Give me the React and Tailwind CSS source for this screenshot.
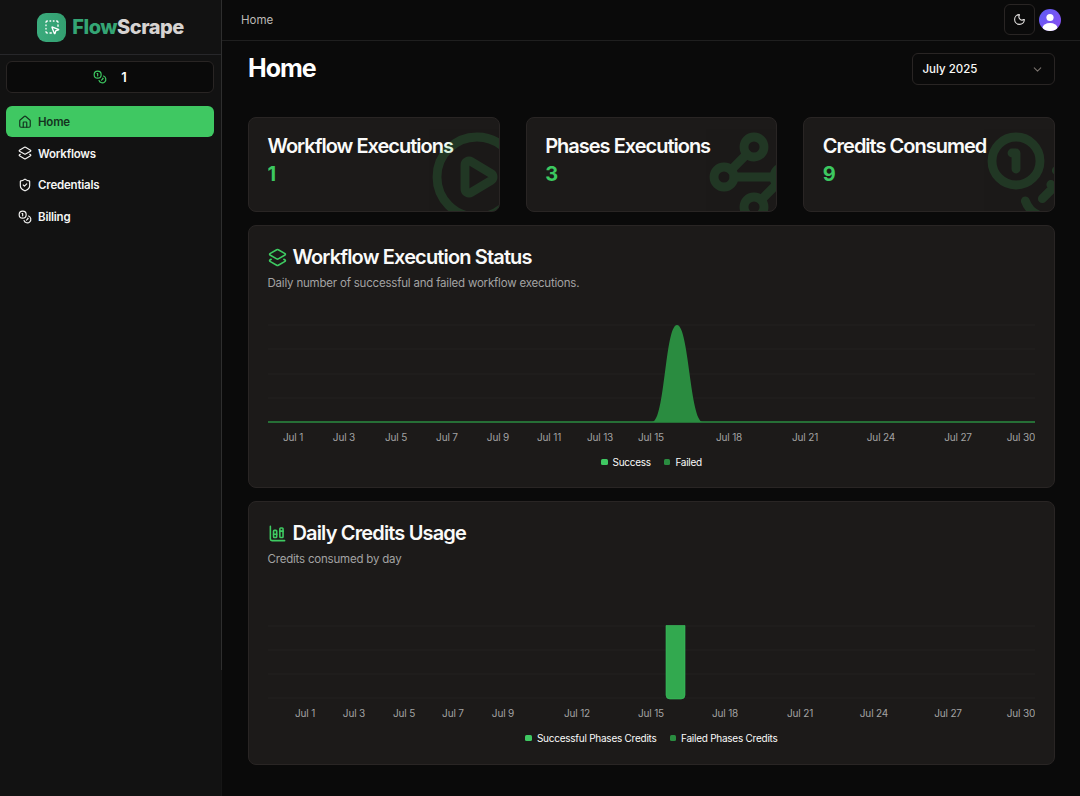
import React from "react";
import {
  ChartColumnStacked,
  ChevronDown,
  CirclePlay,
  Coins,
  House,
  Layers2,
  Moon,
  ShieldCheck,
  SquareDashedMousePointer,
  Waypoints,
} from "lucide-react";

const navItems = [
  { label: "Home", icon: House, active: true },
  { label: "Workflows", icon: Layers2 },
  { label: "Credentials", icon: ShieldCheck },
  { label: "Billing", icon: Coins },
];

const stats = [
  { title: "Workflow Executions", value: 1, icon: CirclePlay },
  { title: "Phases Executions", value: 3, icon: Waypoints },
  { title: "Credits Consumed", value: 9, icon: Coins },
];

const statusTicks = [
  ["Jul 1", 25],
  ["Jul 3", 76],
  ["Jul 5", 128],
  ["Jul 7", 179],
  ["Jul 9", 230],
  ["Jul 11", 281],
  ["Jul 13", 332],
  ["Jul 15", 383],
  ["Jul 18", 461],
  ["Jul 21", 537],
  ["Jul 24", 613],
  ["Jul 27", 690],
  ["Jul 30", 753],
];

const creditTicks = [
  ["Jul 1", 37],
  ["Jul 3", 86],
  ["Jul 5", 136],
  ["Jul 7", 185],
  ["Jul 9", 235],
  ["Jul 12", 309],
  ["Jul 15", 383],
  ["Jul 18", 457],
  ["Jul 21", 532],
  ["Jul 24", 606],
  ["Jul 27", 680],
  ["Jul 30", 753],
];

const Sidebar = () => (
  <aside className="relative w-[222px] shrink-0 border-r border-[#161616] bg-[#121212]">
    <div className="flex h-[55px] items-center justify-center gap-[6px] border-b border-[#27272a]">
      <div className="flex size-[29px] items-center justify-center rounded-[9px] bg-gradient-to-r from-[#3bab7d] to-[#339f70]">
        <SquareDashedMousePointer size={16} className="text-white" strokeWidth={2} />
      </div>
      <div className="text-[20px] font-extrabold tracking-[-0.5px]">
        <span className="text-[#34a574]">Flow</span>
        <span className="text-[#d6d3d1]">Scrape</span>
      </div>
    </div>
    <div className="py-1.5 pr-[7px] pl-1.5">
      <div className="flex h-[32px] items-center justify-center gap-[14px] rounded-md border border-[#292524] bg-[#0a0a0a]">
        <Coins size={14} className="text-[#3ecb62]" />
        <span className="pt-0.5 text-[13px] font-semibold text-white">1</span>
      </div>
    </div>
    <nav className="mt-[7px] flex flex-col gap-[0.7px] pr-[7px] pl-1.5">
      {navItems.map(({ label, icon: Icon, active }) => (
        <div
          key={label}
          className={`flex h-[31px] items-center gap-[6px] rounded-md px-3 text-[11.5px] font-semibold tracking-[-0.2px] ${
            active ? "bg-[#3fc862] text-[#14331f]" : "text-[#f5f5f4]"
          }`}
        >
          <Icon size={14} />
          <span className="pt-0.5">{label}</span>
        </div>
      ))}
    </nav>
    {/* scrollbar thumb sitting on the sidebar edge */}
    <div className="absolute top-0 -right-px h-[670px] w-px bg-[#2e2e2e]" />
  </aside>
);

const Avatar = () => (
  <div className="size-[22px] overflow-hidden rounded-full bg-gradient-to-br from-[#5b5bf5] to-[#8b4ff0]">
    <svg viewBox="0 0 22 22" className="size-full">
      <circle cx="11" cy="8.5" r="3.6" fill="#fff" />
      <ellipse cx="11" cy="19" rx="7.5" ry="5" fill="#fff" />
    </svg>
  </div>
);

const Header = () => (
  <header className="flex h-[41px] shrink-0 items-center justify-between border-b border-[#1f1f1f] px-[19px]">
    <span className="pt-0.5 text-[11.5px] text-[#bcb9b6]">Home</span>
    <div className="flex items-center gap-1">
      <button className="mb-px flex size-[31px] items-center justify-center rounded-md border border-[#292524]">
        <Moon size={13} className="text-[#e7e5e4]" />
      </button>
      <Avatar />
    </div>
  </header>
);

const StatCard = ({ title, value, icon: Icon }) => (
  <div className="relative h-[95px] overflow-hidden rounded-lg border border-[#292524] bg-[#1c1a19] px-[18.5px] pt-[13px]">
    <div className="text-[20px] leading-[30px] font-semibold tracking-[-1px] text-[#fafaf9]">{title}</div>
    <div className="text-[20px] leading-[26px] font-bold text-[#3cc860]">{value}</div>
    <Icon size={96} strokeWidth={2.2} className="absolute -right-[26px] -bottom-[14px] text-[#3fc862] opacity-[0.17]" />
  </div>
);

const Legend = ({ items }) => (
  <div className="flex justify-center gap-[13px] text-[10px] leading-4 tracking-[-0.25px] text-[#fafaf9]">
    {items.map(([label, color]) => (
      <div key={label} className="flex items-center gap-[5px]">
        <span className={`size-[6.5px] rounded-[1.5px] ${color}`} />
        {label}
      </div>
    ))}
  </div>
);

const GridLines = ({ ys }) =>
  ys.map((y) => <line key={y} x1="0" x2="767" y1={y} y2={y} stroke="#292524" strokeWidth="1" strokeOpacity="0.6" />);

const Ticks = ({ ticks, y }) =>
  ticks.map(([label, x]) => (
    <text key={label} x={x} y={y} textAnchor="middle" fontSize="10" letterSpacing="-0.15" fill="#a3a3a3">
      {label}
    </text>
  ));

const ChartCard = ({ icon: Icon, title, subtitle, children, className }) => (
  <div className={`rounded-lg border border-[#292524] bg-[#1c1a19] px-[18.5px] ${className}`}>
    <div className="flex items-center gap-[6px]">
      <Icon size={19} className="text-[#3ecb62]" />
      <h2 className="text-[20px] leading-7 font-semibold tracking-[-0.85px] text-[#fafaf9]">{title}</h2>
    </div>
    <p className="mt-1 text-[11.5px] leading-4 tracking-[-0.2px] text-[#a3a3a3]">{subtitle}</p>
    {children}
  </div>
);

const StatusChart = () => (
  <svg viewBox="0 0 767 130" className="mt-[33px] block h-[130px] w-[767px]">
    <GridLines ys={[1, 25, 50, 74]} />
    <path d="M384 98 C397 98 397 1 409 1 C421 1 422 98 435 98 Z" fill="#2a8c40" />
    <line x1="0" x2="767" y1="98" y2="98" stroke="#2a8c40" strokeWidth="1.5" />
    <Ticks ticks={statusTicks} y={117} />
  </svg>
);

const CreditsChart = () => (
  <svg viewBox="0 0 767 105" className="mt-[58px] block h-[105px] w-[767px]">
    <GridLines ys={[1, 25, 49, 73]} />
    <path
      d="M398 0.5 H417 V70 A4 4 0 0 1 413 74 H402 A4 4 0 0 1 398 70 Z"
      fill="#32a94f"
      stroke="#3ac25d"
      strokeOpacity="0.6"
    />
    <Ticks ticks={creditTicks} y={92} />
  </svg>
);

const App = () => {
  return (
    <div className="flex h-screen w-full overflow-hidden bg-[#0a0a0a] font-['Inter',sans-serif]">
      <Sidebar />
      <div className="flex min-w-0 flex-1 flex-col">
        <Header />
        <main className="flex-1 pr-[25px] pl-[26px]">
          <div className="flex items-start justify-between pt-3">
            <h1 className="text-[25px] leading-[30px] font-bold tracking-[-1px] text-white">Home</h1>
            <div className="flex h-[32px] w-[143px] items-center justify-between rounded-md border border-[#292524] pr-[10px] pl-[9.5px] text-[11.5px] font-medium text-[#fafaf9]">
              <span className="pt-0.5">July 2025</span>
              <ChevronDown size={13} className="text-[#78716c]" />
            </div>
          </div>
          <div className="mt-8 grid grid-cols-3 gap-[26px]">
            {stats.map((stat) => (
              <StatCard key={stat.title} {...stat} />
            ))}
          </div>
          <ChartCard
            className="mt-[13px] h-[263px] pt-[17px]"
            icon={Layers2}
            title="Workflow Execution Status"
            subtitle="Daily number of successful and failed workflow executions."
          >
            <StatusChart />
            <Legend
              items={[
                ["Success", "bg-[#3fc862]"],
                ["Failed", "bg-[#2a8c40]"],
              ]}
            />
          </ChartCard>
          <ChartCard
            className="mt-[13px] h-[264px] pt-[17px]"
            icon={ChartColumnStacked}
            title="Daily Credits Usage"
            subtitle="Credits consumed by day"
          >
            <CreditsChart />
            <Legend
              items={[
                ["Successful Phases Credits", "bg-[#3fc862]"],
                ["Failed Phases Credits", "bg-[#2a8c40]"],
              ]}
            />
          </ChartCard>
        </main>
      </div>
    </div>
  );
};

export default App;
